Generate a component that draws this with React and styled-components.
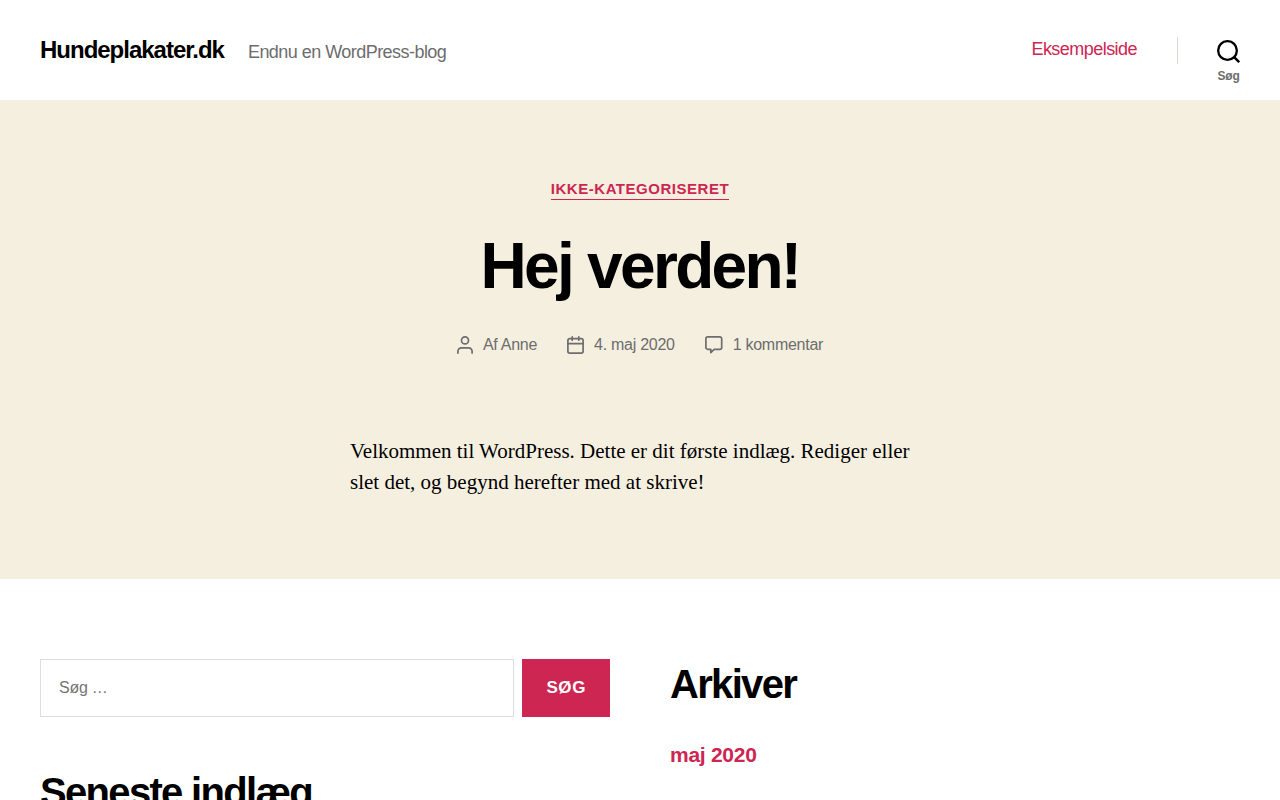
import React from "react";
import styled, { createGlobalStyle, ThemeProvider } from "styled-components";

const theme = {
  body: "#fff",
  cover: "#f5efe0",
  text: "#000",
  muted: "#6d6d6d",
  accent: "#cd2653",
  line: "#dcd7ca",
  border: "#dedede",
  sans: `"Liberation Sans", Arial, sans-serif`,
  serif: `"Liberation Serif", "Times New Roman", serif`,
};

const GlobalStyle = createGlobalStyle`
  *,
  *::before,
  *::after {
    box-sizing: border-box;
  }
  body {
    margin: 0;
    background: ${props => props.theme.body};
    color: ${props => props.theme.text};
    font-family: ${props => props.theme.sans};
    font-size: 18px;
    letter-spacing: -0.015em;
  }
  h1,
  h2,
  p,
  ul {
    margin: 0;
    padding: 0;
  }
  ul {
    list-style: none;
  }
`;

const Header = styled.header`
  display: flex;
  align-items: center;
  justify-content: space-between;
  min-height: 100px;
  padding: 0 40px;
`;
const Titles = styled.div`
  display: flex;
  align-items: baseline;
  flex-wrap: wrap;
  gap: 0 24px;
`;
const SiteTitle = styled.a`
  color: ${props => props.theme.text};
  font-size: 24px;
  font-weight: 700;
  line-height: 28px;
  letter-spacing: -0.042em;
  text-decoration: none;
`;
const Tagline = styled.p`
  color: ${props => props.theme.muted};
  letter-spacing: -0.03em;
`;
const HeaderNav = styled.div`
  display: flex;
  align-items: flex-start;
  padding-top: 20px;
`;
const NavLink = styled.a`
  color: ${props => props.theme.accent};
  line-height: 24px;
  letter-spacing: -0.03em;
  text-decoration: none;
  &:hover {
    text-decoration: underline;
  }
`;
const Divider = styled.div`
  width: 1px;
  height: 27px;
  margin: 0 39px 0 40px;
  background: ${props => props.theme.line};
`;
const SearchToggle = styled.button`
  display: flex;
  flex-direction: column;
  align-items: center;
  gap: 6px;
  padding: 3px 0 0;
  border: 0;
  background: none;
  color: ${props => props.theme.text};
  font: 700 12px/14px ${props => props.theme.sans};
  cursor: pointer;
  span {
    color: ${props => props.theme.muted};
    letter-spacing: -0.015em;
  }
`;

const Cover = styled.main`
  padding: 80px 40px 81px;
  background: ${props => props.theme.cover};
`;
const PostHeader = styled.header`
  display: flex;
  flex-direction: column;
  align-items: center;
  gap: 30px;
  text-align: center;
`;
const Category = styled.a`
  padding-bottom: 2px;
  border-bottom: 1px solid currentColor;
  color: ${props => props.theme.accent};
  font-size: 15px;
  font-weight: 700;
  line-height: 17px;
  letter-spacing: 0.035em;
  text-decoration: none;
  text-transform: uppercase;
`;
const PostTitle = styled.h1`
  font-size: 64px;
  font-weight: 700;
  line-height: 72px;
  letter-spacing: -0.042em;
`;
const PostMeta = styled.ul`
  display: flex;
  flex-wrap: wrap;
  justify-content: center;
  gap: 0 30px;
`;
const MetaItem = styled.li`
  display: flex;
  align-items: center;
  gap: 10px;
  color: ${props => props.theme.muted};
  font-size: 16px;
  line-height: 26px;
  a {
    color: inherit;
    text-decoration: none;
  }
`;
const PostContent = styled.div`
  max-width: 580px;
  margin: 78px auto 0;
  font-family: ${props => props.theme.serif};
  font-size: 21px;
  line-height: 31px;
  letter-spacing: normal;
`;

const Widgets = styled.footer`
  display: grid;
  grid-template-columns: 1fr 1fr;
  gap: 60px;
  padding: 80px 40px;
`;
const Column = styled.div`
  display: flex;
  flex-direction: column;
  gap: 50px;
`;
const SearchForm = styled.form`
  display: flex;
  gap: 8px;
`;
const SearchInput = styled.input`
  flex: 1;
  min-width: 0;
  height: 58px;
  padding: 0 18px;
  border: 1px solid ${props => props.theme.border};
  border-radius: 0;
  background: ${props => props.theme.body};
  font: 16px ${props => props.theme.sans};
  letter-spacing: -0.015em;
  &::placeholder {
    color: #757575;
  }
`;
const SubmitButton = styled.button`
  padding: 0 24px;
  border: 0;
  background: ${props => props.theme.accent};
  color: #fff;
  font: 700 17px ${props => props.theme.sans};
  letter-spacing: 0.035em;
  text-transform: uppercase;
  cursor: pointer;
`;
const WidgetTitle = styled.h2`
  margin-bottom: 30px;
  font-size: 40px;
  font-weight: 700;
  line-height: 50px;
  letter-spacing: -0.042em;
`;
const WidgetLink = styled.a`
  color: ${props => props.theme.accent};
  font-size: 21px;
  font-weight: 700;
  line-height: 32px;
  text-decoration: none;
`;

const SearchIcon = () => (
  <svg width="23" height="23" viewBox="0 0 23 23" fill="none" stroke="currentColor" strokeWidth="2.33" aria-hidden="true">
    <circle cx="10.5" cy="10.5" r="9.34" />
    <path d="M16.9 16.9l5.3 5.3" />
  </svg>
);

const MetaIcon = ({ width, height, children }) => (
  <svg
    width={width}
    height={height}
    viewBox={`0 0 ${width} ${height}`}
    fill="none"
    stroke="currentColor"
    strokeWidth="1.7"
    strokeLinecap="round"
    strokeLinejoin="round"
    aria-hidden="true"
  >
    {children}
  </svg>
);

const UserIcon = () => (
  <MetaIcon width={16} height={18}>
    <circle cx="8" cy="4.4" r="3.5" />
    <path d="M.9 17.1v-1.8a3.5 3.5 0 0 1 3.5-3.5h7.2a3.5 3.5 0 0 1 3.5 3.5v1.8" />
  </MetaIcon>
);

const CalendarIcon = () => (
  <MetaIcon width={17} height={18}>
    <rect x=".9" y="2.6" width="15.2" height="14.5" rx="1.8" />
    <path d="M5.2.9v3.3M11.8.9v3.3M.9 7.6h15.2" />
  </MetaIcon>
);

const CommentIcon = () => (
  <MetaIcon width={18} height={18}>
    <path d="M2.8.9h12a1.9 1.9 0 0 1 1.9 1.9v8.6a1.9 1.9 0 0 1-1.9 1.9H9.2L5.8 16.6v-3.3H2.8A1.9 1.9 0 0 1 .9 11.4V2.8A1.9 1.9 0 0 1 2.8.9z" />
  </MetaIcon>
);

const App = () => {
  return (
    <ThemeProvider theme={theme}>
      <GlobalStyle />
      <Header>
        <Titles>
          <SiteTitle href="#">Hundeplakater.dk</SiteTitle>
          <Tagline>Endnu en WordPress-blog</Tagline>
        </Titles>
        <HeaderNav>
          <nav>
            <NavLink href="#eksempelside">Eksempelside</NavLink>
          </nav>
          <Divider />
          <SearchToggle type="button">
            <SearchIcon />
            <span>Søg</span>
          </SearchToggle>
        </HeaderNav>
      </Header>
      <Cover>
        <article>
          <PostHeader>
            <Category href="#ikke-kategoriseret">Ikke-kategoriseret</Category>
            <PostTitle>Hej verden!</PostTitle>
            <PostMeta>
              <MetaItem>
                <UserIcon />
                <span>
                  Af <a href="#anne">Anne</a>
                </span>
              </MetaItem>
              <MetaItem>
                <CalendarIcon />
                <a href="#dato">4. maj 2020</a>
              </MetaItem>
              <MetaItem>
                <CommentIcon />
                <a href="#kommentarer">1 kommentar</a>
              </MetaItem>
            </PostMeta>
          </PostHeader>
          <PostContent>
            <p>
              Velkommen til WordPress. Dette er dit første indlæg. Rediger eller
              slet det, og begynd herefter med at skrive!
            </p>
          </PostContent>
        </article>
      </Cover>
      <Widgets>
        <Column>
          <SearchForm role="search" onSubmit={e => e.preventDefault()}>
            <SearchInput type="search" placeholder="Søg …" aria-label="Søg" />
            <SubmitButton type="submit">Søg</SubmitButton>
          </SearchForm>
          <section>
            <WidgetTitle>Seneste indlæg</WidgetTitle>
          </section>
        </Column>
        <Column>
          <section>
            <WidgetTitle>Arkiver</WidgetTitle>
            <ul>
              <li>
                <WidgetLink href="#maj-2020">maj 2020</WidgetLink>
              </li>
            </ul>
          </section>
        </Column>
      </Widgets>
    </ThemeProvider>
  );
};

export default App;
